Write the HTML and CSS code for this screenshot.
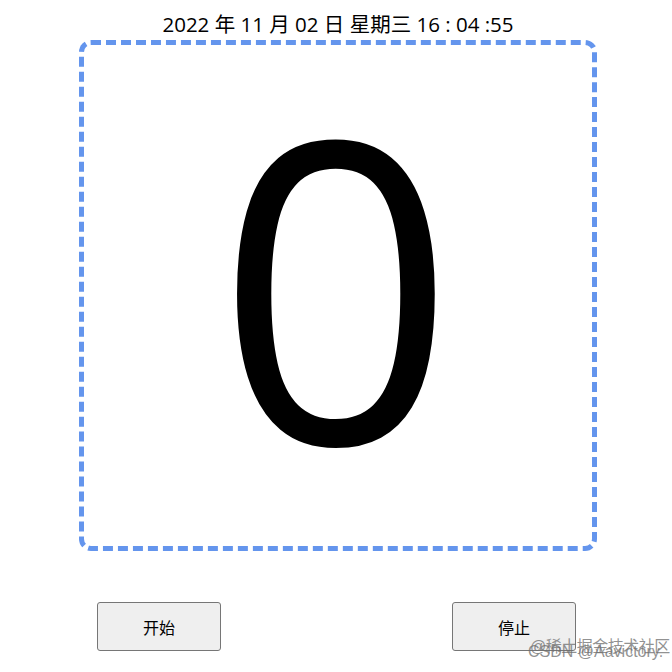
FILE: index.html
```html
<!DOCTYPE html>
<html lang="zh">
<head>
<meta charset="utf-8">
<link rel="stylesheet" href="styles.css">
</head>
<body>
<div class="page">
  <div class="date">2022 年 11 月 02 日 星期三 16 : 04 :55</div>
  <div class="box"><span class="num">0</span></div>
  <div class="actions">
    <button class="btn">开始</button>
    <button class="btn">停止</button>
  </div>
</div>
<div class="watermark">
  <span class="wm1">@稀土掘金技术社区</span>
  <span class="wm2">CSDN @Aavictory.</span>
</div>
</body>
</html>
```
FILE: styles.css
```css
html, body {
  margin: 0;
  padding: 0;
  background: #fff;
}
body {
  width: 672px;
  height: 672px;
  overflow: hidden;
  position: relative;
  font-family: "Open Sans", "Noto Sans CJK SC", sans-serif;
  color: #000;
}
.page {
  display: flex;
  flex-direction: column;
  align-items: center;
  padding-left: 4px;
}
.date {
  margin-top: 11px;
  height: 28px;
  line-height: 26px;
  font-size: 20.5px;
  white-space: nowrap;
}
.box {
  box-sizing: border-box;
  width: 518px;
  height: 511px;
  margin-top: 1px;
  border: 5px dashed #6495ed;
  border-radius: 12px;
  display: flex;
  align-items: center;
  justify-content: center;
}
.num {
  font-family: "Open Sans", sans-serif;
  font-size: 420px;
  line-height: 420px;
  margin-top: -30px;
  margin-left: -4px;
}
.actions {
  width: 518px;
  box-sizing: border-box;
  padding: 0 21px 0 18px;
  margin-top: 51px;
  display: flex;
  justify-content: space-between;
}
.btn {
  width: 124px;
  height: 49px;
  background: #efefef;
  border: 1px solid #767676;
  border-radius: 3px;
  font-family: "Noto Sans CJK SC", sans-serif;
  font-size: 16px;
  color: #000;
  padding: 0;
}
.watermark {
  position: absolute;
  left: 528px;
  top: 633px;
  width: 144px;
  height: 34px;
  font-family: "Liberation Sans", "Noto Sans CJK SC", sans-serif;
  font-size: 16px;
  color: rgba(110, 110, 110, 0.75);
  pointer-events: none;
}
.wm1 {
  position: absolute;
  left: 2px;
  top: 0;
  white-space: nowrap;
  letter-spacing: -0.5px;
}
.wm2 {
  position: absolute;
  left: 0;
  top: 10px;
  white-space: nowrap;
}
```
